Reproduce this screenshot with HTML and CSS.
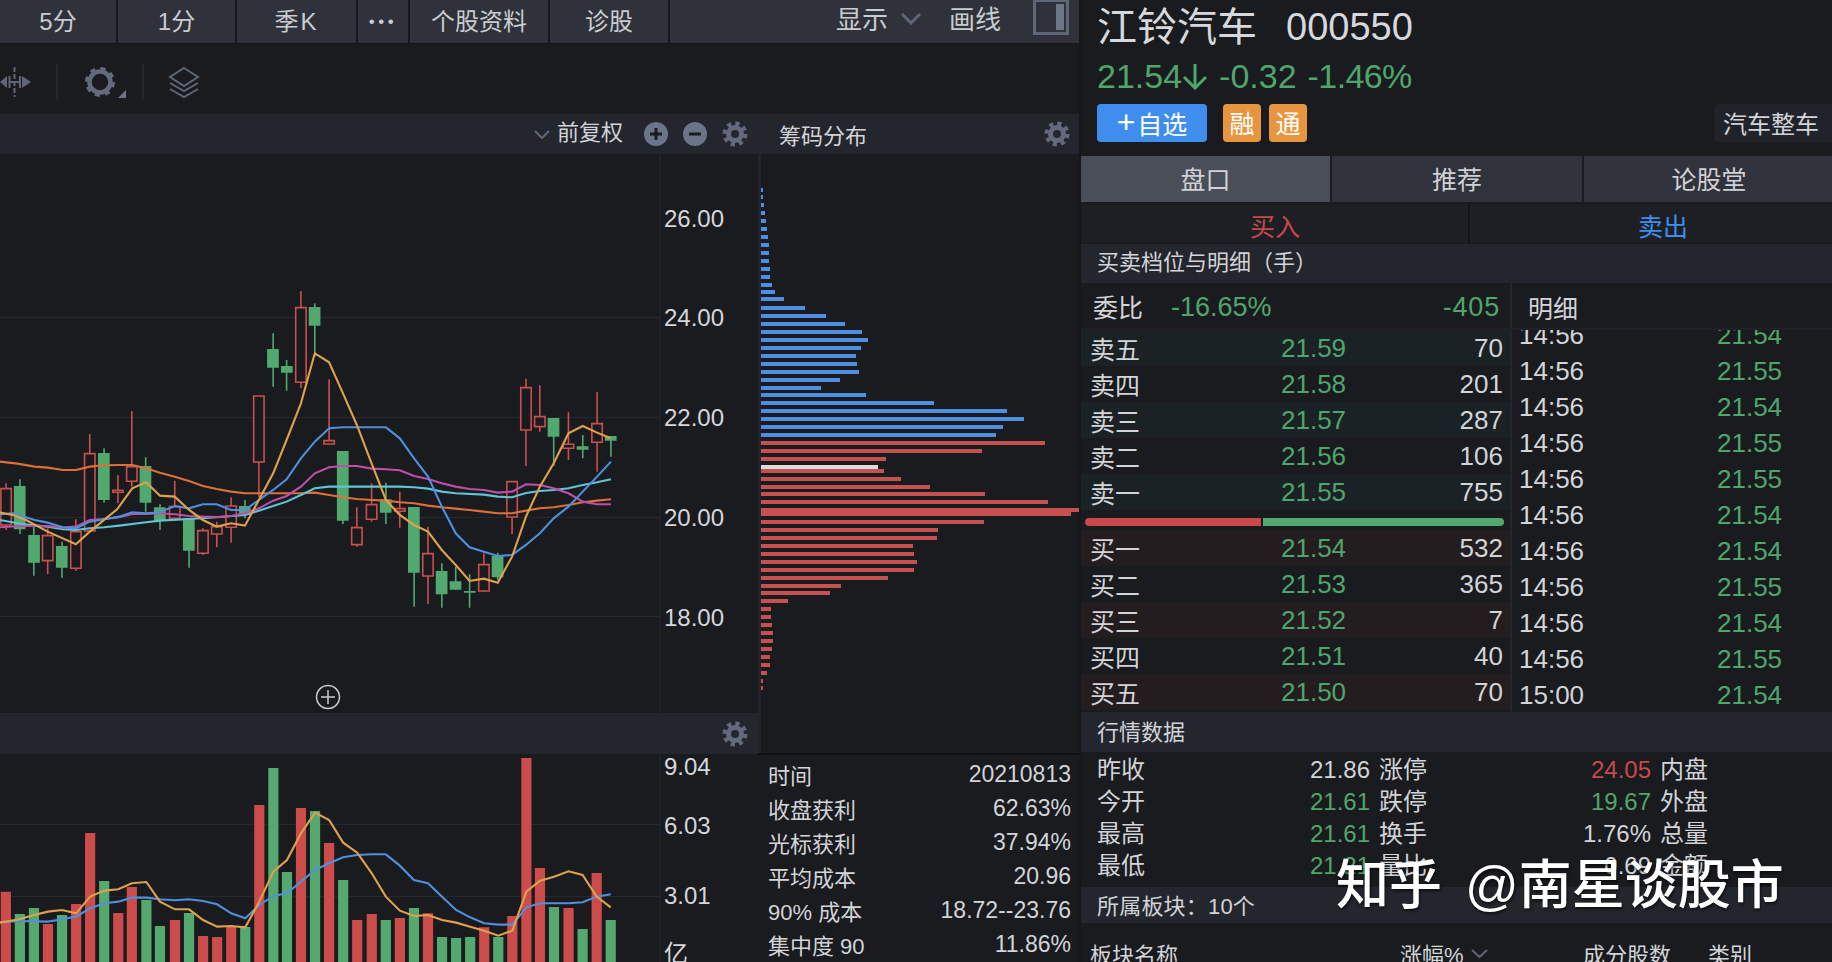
FILE: index.html

```html
<!DOCTYPE html>
<html>
<head>
    <title>江铃汽车 000550</title>
    <meta charset="utf-8">
    <link rel="stylesheet" href="styles.css">
</head>
<body>
<svg class="defs" width="0" height="0">
    <symbol id="gear" viewBox="-13 -13 26 26">
        <circle r="6.5" fill="none" stroke="#626a7c" stroke-width="5"/>
        <circle r="10.3" fill="none" stroke="#626a7c" stroke-width="4.4" stroke-dasharray="4.1 3.99"/>
    </symbol>
</svg>
<div class="app">
    <div class="left">
        <div class="topbar">
            <div class="tab w118">5分</div>
            <div class="tab w119">1分</div>
            <div class="tab w121 season">季K</div>
            <div class="tab w52 dots">•••</div>
            <div class="tab w140">个股资料</div>
            <div class="tab w120">诊股</div>
            <div class="top-tools">
                <span>显示</span>
                <svg class="chev-top" width="20" height="12" viewBox="0 0 20 12"><path d="M1 1l9 9 9-9" fill="none" stroke="#5e6678" stroke-width="3"/></svg>
                <span class="draw">画线</span>
                <svg class="panel-icon" width="36" height="36" viewBox="0 0 36 36"><path d="M1.5 0V34.500H34.500V0" fill="none" stroke="#5e6678" stroke-width="3"/><path d="M1.500 1.500H34.500" stroke="#5e6678" stroke-width="3"/><rect x="23" y="5" width="8" height="26" fill="#6d7689"/></svg>
            </div>
        </div>
        <div class="toolbar">
            <svg width="210" height="70" viewBox="0 44 210 70">
                <path d="M0 82l7-6v12zM22 76l9 6-9 6z" fill="#5e6678"/>
                <path d="M9.500 76v12M20 76v12M9.500 82H20" stroke="#5e6678" stroke-width="2"/>
                <path d="M14.500 67v30" stroke="#5e6678" stroke-width="2" stroke-dasharray="5 2"/>
                <path d="M57 64v36M143 64v36" stroke="#24262c" stroke-width="2"/>
                <circle cx="100" cy="82" r="10.500" fill="none" stroke="#626a7c" stroke-width="4.500"/>
                <circle cx="100" cy="82" r="13" fill="none" stroke="#626a7c" stroke-width="4" stroke-dasharray="5 5.210"/>
                <path d="M118 98l8-8v8z" fill="#6d7689"/>
                <path d="M184 68l14 9-14 9-14-9zM170 83l14 8 14-8M170 89l14 8 14-8" fill="none" stroke="#5e6678" stroke-width="2"/>
            </svg>
        </div>
        <div class="panes">
            <div class="main">
                <div class="band band-head">
                    <svg width="16" height="9" viewBox="0 0 16 9"><path d="M1 1l7 7 7-7" fill="none" stroke="#5e6678" stroke-width="2"/></svg>
                    <span class="fq">前复权</span>
                    <svg class="round-btn" width="24" height="24" viewBox="0 0 24 24"><circle cx="12" cy="12" r="12" fill="#6b7489"/><path d="M6 12h12M12 6v12" stroke="#191b1f" stroke-width="3"/></svg>
                    <svg class="round-btn" width="24" height="24" viewBox="0 0 24 24"><circle cx="12" cy="12" r="12" fill="#6b7489"/><path d="M6 12h12" stroke="#191b1f" stroke-width="3"/></svg>
                    <svg class="gear-btn" width="26" height="26"><use href="#gear"/></svg>
                </div>
                <svg class="kline" width="758" height="559" viewBox="0 154 758 559">
                    <path class="grid" d="M0 317.500H660M0 417.500H660M0 517.500H660M0 616.500H660M660 154V713"/>
                    <g transform="translate(0,270) scale(.4336,.3333)">
                        <path class="wick red" d="M14 640V780M110 775V912M175 748V902M207 492V785M272 615V700M304 423V650M403 632V750M468 775V855M500 755V832M533 682V818M597 378V680M694 63V355M759 328V522M823 712V830M857 640V755M922 665V773M987 770V1002M1116 850V965M1181 635V792M1213 326V588M1245 346V485M1311 427V570M1377 366V605"/>
                        <path class="body red" d="M2 656h24v109h-24zM98 797h24v75h-24zM163 785h24v110h-24zM195 551h24v232h-24zM260 661h24v6h-24zM292 590h24v44h-24zM391 710h24v35h-24zM456 782h24v68h-24zM488 770h24v22h-24zM521 708h24v64h-24zM585 378h24v198h-24zM682 113h24v224h-24zM747 512h24v10h-24zM811 773h24v51h-24zM845 704h24v44h-24zM910 716h24v8h-24zM975 851h24v67h-24zM1104 884h24v79h-24zM1169 635h24v106h-24zM1201 353h24v127h-24zM1233 440h24v30h-24zM1299 523h24v12h-24zM1365 461h24v56h-24z"/>
                        <path class="wick green" d="M46 628V792M78 770V917M143 815V923M240 535V698M336 562V725M369 703V780M436 745V893M565 690V745M630 190V350M661 270V362M726 100V260M791 543V762M890 638V762M955 711V1010M1019 880V1013M1051 890V960M1083 913V1013M1148 848V930M1277 444V588M1344 495V565M1409 498V560"/>
                        <path class="fill-green" d="M32 648h27v130h-27zM65 795h27v83h-27zM129 828h27v65h-27zM226 549h27v141h-27zM322 588h27v110h-27zM355 712h27v38h-27zM422 745h27v97h-27zM551 708h27v27h-27zM616 237h27v56h-27zM648 288h27v20h-27zM712 111h27v56h-27zM777 543h27v209h-27zM876 688h27v40h-27zM941 711h27v197h-27zM1005 903h27v70h-27zM1037 934h27v25h-27zM1070 963h27v5h-27zM1134 858h27v64h-27zM1263 444h27v56h-27zM1330 529h27v10h-27zM1395 498h27v14h-27z"/>
                        <polyline class="ma ma60" points="0,575 40,581 80,590 110,593 145,600 175,600 207,590 240,586 275,585 305,585 337,595 369,608 403,620 436,633 468,648 500,657 533,665 565,670 597,670 630,670 661,670 694,670 726,668 759,675 791,682 823,687 857,690 890,692 922,697 955,700 987,707 1019,712 1051,716 1083,720 1116,725 1148,730 1181,730 1213,722 1245,715 1277,712 1311,705 1344,697 1377,692 1409,688"/>
                        <polyline class="ma ma30" points="0,750 50,762 110,770 145,778 175,780 207,775 240,772 275,767 337,757 369,752 436,747 500,742 565,735 597,722 630,708 661,695 694,675 726,655 759,650 791,650 857,650 922,650 955,652 987,656 1019,665 1051,670 1116,674 1148,680 1181,682 1213,669 1245,663 1277,660 1311,655 1344,645 1377,637 1409,628"/>
                        <polyline class="ma ma20" points="0,772 50,768 110,768 145,773 175,770 207,750 240,747 275,742 305,732 337,732 369,730 403,733 436,738 468,740 500,741 533,738 565,730 597,715 630,692 661,678 694,650 726,610 759,592 791,588 823,588 857,596 890,598 922,601 955,618 987,627 1019,640 1051,650 1083,657 1116,660 1148,668 1181,665 1213,643 1245,645 1277,655 1311,670 1344,695 1377,703 1409,703"/>
                        <polyline class="ma ma10" points="0,733 30,730 50,738 80,750 110,758 145,772 175,775 207,755 240,748 275,740 305,727 337,730 369,727 403,708 436,715 468,703 500,703 533,720 565,720 597,690 630,660 661,628 694,565 726,515 759,475 791,472 823,472 857,472 890,472 922,505 955,565 987,620 1019,710 1051,790 1083,832 1116,845 1148,858 1181,855 1213,825 1245,790 1277,745 1311,710 1344,665 1377,620 1409,575"/>
                        <polyline class="ma ma5" points="0,728 30,735 60,750 110,785 175,823 207,785 270,718 305,655 337,637 369,677 403,680 436,720 468,750 500,770 533,760 565,767 597,690 630,610 661,510 694,400 726,250 759,277 791,370 823,465 857,580 890,690 922,735 955,765 987,785 1019,840 1051,885 1083,933 1116,926 1148,938 1181,860 1213,740 1245,650 1277,580 1311,490 1344,468 1377,488 1409,505"/>
                    </g>
                    <g class="axis">
                        <text x="664" y="227">26.00</text>
                        <text x="664" y="326">24.00</text>
                        <text x="664" y="426">22.00</text>
                        <text x="664" y="526">20.00</text>
                        <text x="664" y="626">18.00</text>
                    </g>
                    <circle cx="328" cy="697" r="11.500" fill="none" stroke="#c8cacd" stroke-width="1.500"/>
                    <path d="M321 697h14M328 690v14" stroke="#c8cacd" stroke-width="1.500"/>
                </svg>
                <div class="band band-vol">
                    <svg class="gear-btn" width="26" height="26"><use href="#gear"/></svg>
                </div>
                <svg class="vol" width="758" height="208" viewBox="0 754 758 208">
                    <path class="grid" d="M0 824.500H660M0 896.500H660M660 754V962"/>
                    <g transform="translate(0,700) scale(.4847,.3333)">
                        <path class="vol-red" d="M12 575V786M99 672V786M157 612V786M186 399V786M244 639V786M272 561V786M361 660V786M419 708V786M448 711V786M477 680V786M535 315V786M621 324V786M679 429V786M737 660V786M767 642V786M825 654V786M883 640V786M999 682V786M1057 648V786M1086 174V786M1114 504V786M1173 624V786M1231 519V786"/>
                        <path class="vol-green" d="M41 642V786M70 624V786M128 645V786M215 543V786M302 600V786M330 678V786M390 639V786M506 681V786M564 204V786M592 516V786M650 333V786M708 540V786M796 660V786M854 624V786M912 711V786M941 714V786M970 711V786M1028 711V786M1143 621V786M1202 687V786M1260 660V786"/>
                        <polyline class="ma ma10" points="0,667 40,663 99,665 128,658 157,650 186,625 215,610 244,605 272,593 302,593 330,598 361,601 390,598 419,603 448,613 477,640 506,655 535,615 564,588 592,580 621,545 650,510 679,490 708,472 737,465 767,463 796,463 825,497 854,540 883,550 912,590 941,630 970,652 999,670 1028,674 1057,674 1086,622 1114,610 1143,610 1173,610 1202,607 1231,590 1260,583"/>
                        <polyline class="ma ma5" points="0,668 40,658 70,645 99,635 128,630 157,640 186,590 215,572 244,568 272,550 302,546 330,605 361,628 390,628 419,660 448,680 477,678 506,682 535,605 564,515 592,480 621,400 650,338 679,360 708,428 737,458 767,520 796,590 825,632 854,648 883,645 912,660 941,668 970,680 999,692 1028,707 1057,692 1086,575 1114,542 1143,530 1173,514 1202,525 1231,590 1260,622"/>
                    </g>
                    <g class="axis">
                        <text x="664" y="775">9.04</text>
                        <text x="664" y="834">6.03</text>
                        <text x="664" y="904">3.01</text>
                        <text x="664" y="962">亿</text>
                    </g>
                </svg>
            </div>
            <div class="side">
                <div class="band band-chips">
                    <span>筹码分布</span>
                    <svg class="gear-btn" width="26" height="26"><use href="#gear"/></svg>
                </div>
                <svg class="chips" width="318" height="599" viewBox="761 154 318 599">
                    <path class="chip-blue" d="M761 190h2M761 197h2M761 205h3M761 213h4M761 221h5M761 229h6M761 237h7M761 245h8M761 253h8M761 261h8M761 269h9M761 277h9M761 285h11M761 292h14M761 299h23M761 308h44M761 316h65M761 324h84M761 332h101M761 340h107M761 348h100M761 356h95M761 364h96M761 372h98M761 380h79M761 388h60M761 395h105M761 403h173M761 411h246M761 419h263M761 427h242M761 435h235"/>
                    <path class="chip-red" d="M761 443h284M761 451h221M761 459h125M761 471h123M761 479h140M761 487h169M761 494h224M761 502h287M761 510h318M761 514h310M761 522h223M761 530h177M761 538h176M761 546h152M761 554h153M761 562h156M761 570h153M761 578h127M761 586h80M761 593h69M761 601h27M761 609h10M761 617h10M761 625h11M761 633h12M761 641h12M761 649h11M761 657h9M761 665h9M761 673h6M761 681h2M761 688h2"/>
                    <path class="chip-now" d="M761 467h117"/>
                </svg>
                <div class="stats">
                    <div class="stat"><span>时间</span><span>20210813</span></div>
                    <div class="stat"><span>收盘获利</span><span>62.63%</span></div>
                    <div class="stat"><span>光标获利</span><span>37.94%</span></div>
                    <div class="stat"><span>平均成本</span><span>20.96</span></div>
                    <div class="stat"><span>90% 成本</span><span>18.72--23.76</span></div>
                    <div class="stat"><span>集中度 90</span><span>11.86%</span></div>
                </div>
            </div>
        </div>
    </div>
    <div class="right">
        <div class="stock">
            <div class="stock-name"><span class="cn">江铃汽车</span><span class="code">000550</span></div>
            <div class="stock-price">21.54<svg width="26" height="27" viewBox="0 0 26 27"><path d="M13 1v24M2 14l11 11 11-11" fill="none" stroke="#4fa66c" stroke-width="3"/></svg><span>-0.32</span><span class="pct">-1.46%</span></div>
            <div class="stock-tags">
                <div class="add-btn"><span class="plus">+</span>自选</div>
                <div class="tag">融</div>
                <div class="tag">通</div>
                <div class="sector">汽车整车</div>
            </div>
        </div>
        <div class="tabs">
            <div class="rtab on">盘口</div>
            <div class="rtab">推荐</div>
            <div class="rtab">论股堂</div>
        </div>
        <div class="trade">
            <div class="buy">买入</div>
            <div class="sell">卖出</div>
        </div>
        <div class="section sec-book">买卖档位与明细（手）</div>
        <div class="col-head">
            <div class="ratio"><span class="ratio-lab">委比</span><span class="down">-16.65%</span><span class="down ratio-n">-405</span></div>
            <div class="detail-lab">明细</div>
        </div>
        <div class="book-wrap">
            <div class="book">
                <div class="level ask"><span>卖五</span><span class="down">21.59</span><span>70</span></div>
                <div class="level"><span>卖四</span><span class="down">21.58</span><span>201</span></div>
                <div class="level ask"><span>卖三</span><span class="down">21.57</span><span>287</span></div>
                <div class="level"><span>卖二</span><span class="down">21.56</span><span>106</span></div>
                <div class="level ask"><span>卖一</span><span class="down">21.55</span><span>755</span></div>
                <div class="split"><div class="split-red"></div><div class="split-green"></div></div>
                <div class="level bid"><span>买一</span><span class="down">21.54</span><span>532</span></div>
                <div class="level"><span>买二</span><span class="down">21.53</span><span>365</span></div>
                <div class="level bid"><span>买三</span><span class="down">21.52</span><span>7</span></div>
                <div class="level"><span>买四</span><span class="down">21.51</span><span>40</span></div>
                <div class="level bid"><span>买五</span><span class="down">21.50</span><span>70</span></div>
            </div>
            <div class="ticks">
                <div class="tick first"><span>14:56</span><span class="down">21.54</span></div>
                <div class="tick"><span>14:56</span><span class="down">21.55</span></div>
                <div class="tick"><span>14:56</span><span class="down">21.54</span></div>
                <div class="tick"><span>14:56</span><span class="down">21.55</span></div>
                <div class="tick"><span>14:56</span><span class="down">21.55</span></div>
                <div class="tick"><span>14:56</span><span class="down">21.54</span></div>
                <div class="tick"><span>14:56</span><span class="down">21.54</span></div>
                <div class="tick"><span>14:56</span><span class="down">21.55</span></div>
                <div class="tick"><span>14:56</span><span class="down">21.54</span></div>
                <div class="tick"><span>14:56</span><span class="down">21.55</span></div>
                <div class="tick"><span>15:00</span><span class="down">21.54</span></div>
            </div>
        </div>
        <div class="section sec-quote">行情数据</div>
        <div class="quote">
            <span>昨收</span><span class="val">21.86</span><span class="lab">涨停</span><span class="val up">24.05</span><span class="lab">内盘</span>
            <span>今开</span><span class="val down">21.61</span><span class="lab">跌停</span><span class="val down">19.67</span><span class="lab">外盘</span>
            <span>最高</span><span class="val down">21.61</span><span class="lab">换手</span><span class="val">1.76%</span><span class="lab">总量</span>
            <span>最低</span><span class="val down">21.21</span><span class="lab">量比</span><span class="val">0.69</span><span class="lab">金额</span>
        </div>
        <div class="section sec-plates">所属板块：10个</div>
        <div class="plates-head">
            <span>板块名称</span>
            <span class="sort">涨幅%<svg width="17" height="9" viewBox="0 0 17 9"><path d="M1 1l7.500 7 7.500-7" fill="none" stroke="#5e6678" stroke-width="2"/></svg></span>
            <span>成分股数</span>
            <span>类别</span>
        </div>
    </div>
</div>
<div class="watermark"><span>知乎</span><span>@南星谈股市</span></div>
</body>
</html>
```

FILE: styles.css

```css
* { box-sizing: border-box; }
html, body { margin: 0; padding: 0; width: 1832px; height: 962px; overflow: hidden; background: #15171a; }
body { font-family: "Liberation Sans", "Noto Sans CJK SC", sans-serif; color: #d2d4d8; }
svg { display: block; flex: none; }
.defs { position: absolute; }

.app { display: flex; height: 962px; overflow: hidden; }
.left { width: 1079px; flex: none; background: #191b1f; }
.right { width: 751px; flex: none; margin-left: 2px; background: #191b1f; overflow: hidden; }
.down { color: #4fa66c; }
.up { color: #c9484a; }

.topbar { display: flex; height: 44px; background: #2f323a; border-bottom: 1px solid #131417; font-size: 24px; color: #c9ccd1; }
.tab { display: flex; align-items: center; justify-content: center; padding-bottom: 5px; border-right: 2px solid #16181c; }
.w118 { width: 118px; }
.w119 { width: 119px; }
.w121 { width: 121px; }
.w52 { width: 52px; }
.w140 { width: 140px; }
.w120 { width: 120px; }
.season { letter-spacing: 2px; }
.dots { padding-bottom: 0; font-size: 17px; letter-spacing: 3.5px; }
.top-tools { display: flex; flex: 1; align-items: center; justify-content: flex-end; font-size: 26px; padding: 0 10px 9px 0; }
.chev-top { margin: 4px 0 0 13px; }
.draw { margin-left: 28px; }
.panel-icon { margin: -1px 0 0 32px; align-self: flex-start; }

.toolbar { height: 70px; }
.panes { display: flex; height: 848px; }
.main { width: 758px; flex: none; }
.side { width: 321px; flex: none; }

.band { display: flex; align-items: center; background: #24262e; }
.band-head { height: 40px; padding-right: 10px; justify-content: flex-end; }
.fq { margin: 0 21px 8px 7px; font-size: 22px; }
.round-btn { margin-right: 15px; }
.band-vol { height: 41px; justify-content: flex-end; padding-right: 10px; }
.band-chips { height: 40px; justify-content: space-between; padding: 0 9px 0 21px; font-size: 22px; }

.grid { stroke: #26282e; stroke-width: 1; fill: none; }
.axis text { font-size: 24px; fill: #d5d7db; }
.wick, .body, .ma { vector-effect: non-scaling-stroke; }
.wick { fill: none; stroke-width: 1.6; }
.wick.red { stroke: #c8504f; }
.wick.green { stroke: #52a96f; }
.body.red { fill: #191b1f; stroke: #c8504f; stroke-width: 1.6; }
.fill-green { fill: #52a96f; }
.ma { fill: none; stroke-width: 2.1; }
.ma5 { stroke: #dfa24c; }
.ma10 { stroke: #4f8fdc; }
.ma20 { stroke: #bf4fa6; }
.ma30 { stroke: #5fc5d6; }
.ma60 { stroke: #dd6f3a; }
.vol-red { stroke: #cc4c4b; stroke-width: 21; }
.vol-green { stroke: #55a96f; stroke-width: 21; }

.chips { border-left: 3px solid #21242a; box-sizing: content-box; }
.chip-blue { stroke: #4f8fe0; stroke-width: 4; }
.chip-red { stroke: #c65150; stroke-width: 4; }
.chip-now { stroke: #dcdcdc; stroke-width: 4; }

.stats { height: 209px; padding: 2px 8px 0 10px; border-top: 2px solid #0e0f11; font-size: 22px; }
.stat { display: flex; justify-content: space-between; align-items: center; height: 34px; }
.stat span:last-child { font-size: 23px; }

.stock { height: 155px; padding-left: 16px; }
.stock-name { display: flex; align-items: center; height: 50px; padding-bottom: 2px; }
.cn { font-size: 40px; color: #d6d8dc; }
.code { margin: 6px 0 0 29px; font-size: 38px; color: #d6d8dc; }
.stock-price { display: flex; align-items: center; height: 53px; font-size: 34px; color: #4fa66c; }
.stock-price span { margin-left: 11px; }
.stock-price .pct { letter-spacing: -.6px; }
.stock-tags { display: flex; height: 38px; margin-top: 1px; font-size: 25px; }
.add-btn { display: flex; align-items: center; justify-content: center; width: 110px; background: #3f8eed; border-radius: 4px; color: #fff; }
.plus { font-size: 32px; font-weight: 400; margin: -2px 2px 0 0; }
.tag { display: flex; align-items: center; justify-content: center; width: 38px; margin-left: 16px; padding-bottom: 2px; background: #e8953f; border-radius: 4px; color: #fff; }
.tag + .tag { margin-left: 8px; }
.sector { display: flex; align-items: center; margin-left: auto; padding: 0 12px 2px 8px; width: 117px; background: #20232a; border-radius: 4px 0 0 4px; font-size: 24px; white-space: nowrap; }

.tabs { display: flex; height: 46px; margin-top: 1px; }
.rtab { display: flex; flex: none; align-items: center; justify-content: center; width: 250px; margin-left: 2px; padding-bottom: 2px; background: #30333b; font-size: 25px; color: #cfd1d5; }
.rtab.on { width: 249px; margin-left: 0; background: #4a4e58; }
.rtab:last-child { margin-right: -3px; }
.trade { display: flex; gap: 2px; height: 38px; margin: 3px 0 0 1px; font-size: 25px; background: #141518; }
.trade div { display: flex; flex: none; align-items: center; justify-content: center; padding-top: 2px; background: #1d1f24; }
.buy { width: 386px; color: #c9484a; }
.sell { width: 386px; color: #3f8eed; }

.section { display: flex; align-items: center; background: #24262e; font-size: 22px; }
.sec-book { height: 39px; margin-top: 1px; padding: 0 0 8px 16px; }
.sec-quote { height: 40px; padding: 0 0 4px 16px; }
.sec-plates { height: 36px; padding: 0 0 2px 16px; letter-spacing: .2px; }

.col-head { display: flex; height: 47px; border-bottom: 2px solid #1f2126; }
.ratio { display: flex; align-items: center; width: 429px; padding: 3px 10px 0 12px; font-size: 25px; }
.ratio .down { font-size: 27px; }
.ratio-lab { width: 78px; margin-top: -2px; }
.ratio .ratio-n { margin-left: auto; letter-spacing: .8px; }
.detail-lab { display: flex; align-items: center; flex: 1; padding: 2px 0 0 16px; border-left: 2px solid #24262c; font-size: 25px; }

.book-wrap { display: flex; height: 382px; overflow: hidden; }
.book { width: 429px; padding-bottom: 2px; }
.level { display: grid; grid-template-columns: 191px 1fr auto; align-items: center; height: 36px; padding: 0 7px 4px 9px; font-size: 26px; }
.level span:first-child { font-size: 25px; }
.ask { background: #1a2226; }
.bid { background: #241d20; }
.split { display: flex; gap: 2px; height: 8px; margin: 8px 6px 4px 4px; }
.split-red { width: 176px; background: #c9494a; border-radius: 4px 0 0 4px; }
.split-green { flex: 1; background: #52a96f; border-radius: 0 4px 4px 0; }
.ticks { flex: 1; border-left: 2px solid #24262c; overflow: hidden; }
.tick { display: grid; grid-template-columns: 198px auto; align-items: center; height: 36px; padding-left: 7px; font-size: 26px; }
.tick.first { margin-top: -13px; }

.quote { display: grid; grid-template-columns: 48px 225px 57px 224px 58px; grid-auto-rows: 32px; align-items: start; height: 135px; padding: 3px 0 0 16px; font-size: 24px; line-height: 30px; }
.val { text-align: right; }
.lab { padding-left: 9px; }

.plates-head { display: grid; grid-template-columns: 310px 183px 125px auto; align-items: center; height: 60px; padding-left: 9px; font-size: 22px; }
.sort { display: flex; align-items: center; gap: 7px; }

.watermark { position: absolute; left: 1336px; top: 848px; display: flex; gap: 23px; font-size: 53px; font-weight: 500; line-height: 76px; color: #fff; text-shadow: 1px 2px 3px rgba(0,0,0,.6); white-space: nowrap; }
```
